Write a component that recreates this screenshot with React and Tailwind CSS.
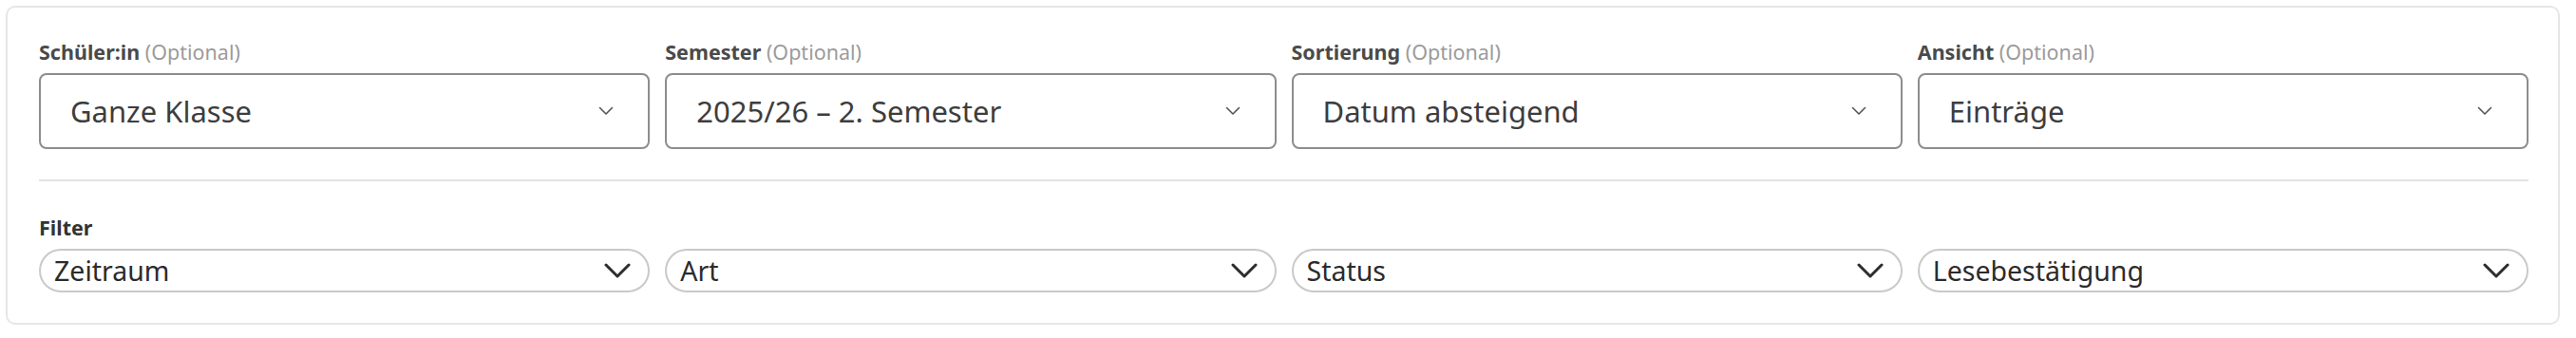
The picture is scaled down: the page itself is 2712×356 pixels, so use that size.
import React from "react";

const font = { fontFamily: "'Noto Sans', sans-serif" };

function SmallChevron() {
  return (
    <svg width="16" height="10" viewBox="0 0 16 10" fill="none" className="shrink-0">
      <path d="M1.5 1.5 L8 8 L14.5 1.5" stroke="#555555" strokeWidth="1.6" strokeLinecap="round" strokeLinejoin="round" />
    </svg>
  );
}

function BigChevron() {
  return (
    <svg width="28" height="16" viewBox="0 0 28 16" fill="none" className="shrink-0">
      <path d="M2 2 L14 14 L26 2" stroke="#2d2d2d" strokeWidth="3" strokeLinecap="round" strokeLinejoin="round" />
    </svg>
  );
}

function Field({ label, value }) {
  return (
    <div className="flex flex-col min-w-0">
      <div className="text-[21.5px] leading-[28px] mb-[8px] whitespace-nowrap">
        <span className="font-bold text-[#4a4a4a]">{label}</span>{" "}
        <span className="text-[#9b9b9b]">(Optional)</span>
      </div>
      <div className="h-[80px] border-2 border-[#8d8d8d] rounded-[8px] flex items-center justify-between pl-[31px] pr-[36px] bg-white">
        <span className="text-[31px] leading-[40px] text-[#3d3d3d] whitespace-nowrap">{value}</span>
        <SmallChevron />
      </div>
    </div>
  );
}

function Pill({ value }) {
  return (
    <div className="h-[46px] border-2 border-[#c9c9c9] rounded-full flex items-center justify-between pl-[14px] pr-[18px] bg-white">
      <span className="text-[28.5px] leading-[40px] text-[#2b2b2b] whitespace-nowrap">{value}</span>
      <BigChevron />
    </div>
  );
}

export default function App() {
  return (
    <div className="bg-white pt-[6px] pl-[6px] pr-[17px] pb-[12px]" style={font}>
      <div className="border-2 border-[#e6e6e6] rounded-[10px] bg-white pl-[33px] pr-[31px] pt-[33px] pb-[32px]">
        <div className="grid grid-cols-4 gap-4">
          <Field label="Schüler:in" value="Ganze Klasse" />
          <Field label="Semester" value="2025/26 – 2. Semester" />
          <Field label="Sortierung" value="Datum absteigend" />
          <Field label="Ansicht" value="Einträge" />
        </div>
        <div className="h-[2px] bg-[#e3e3e3] mt-[32px] mb-[35px]" />
        <div className="text-[21.5px] leading-[28px] font-bold text-[#333333] mb-[8px]">Filter</div>
        <div className="grid grid-cols-4 gap-4">
          <Pill value="Zeitraum" />
          <Pill value="Art" />
          <Pill value="Status" />
          <Pill value="Lesebestätigung" />
        </div>
      </div>
    </div>
  );
}
